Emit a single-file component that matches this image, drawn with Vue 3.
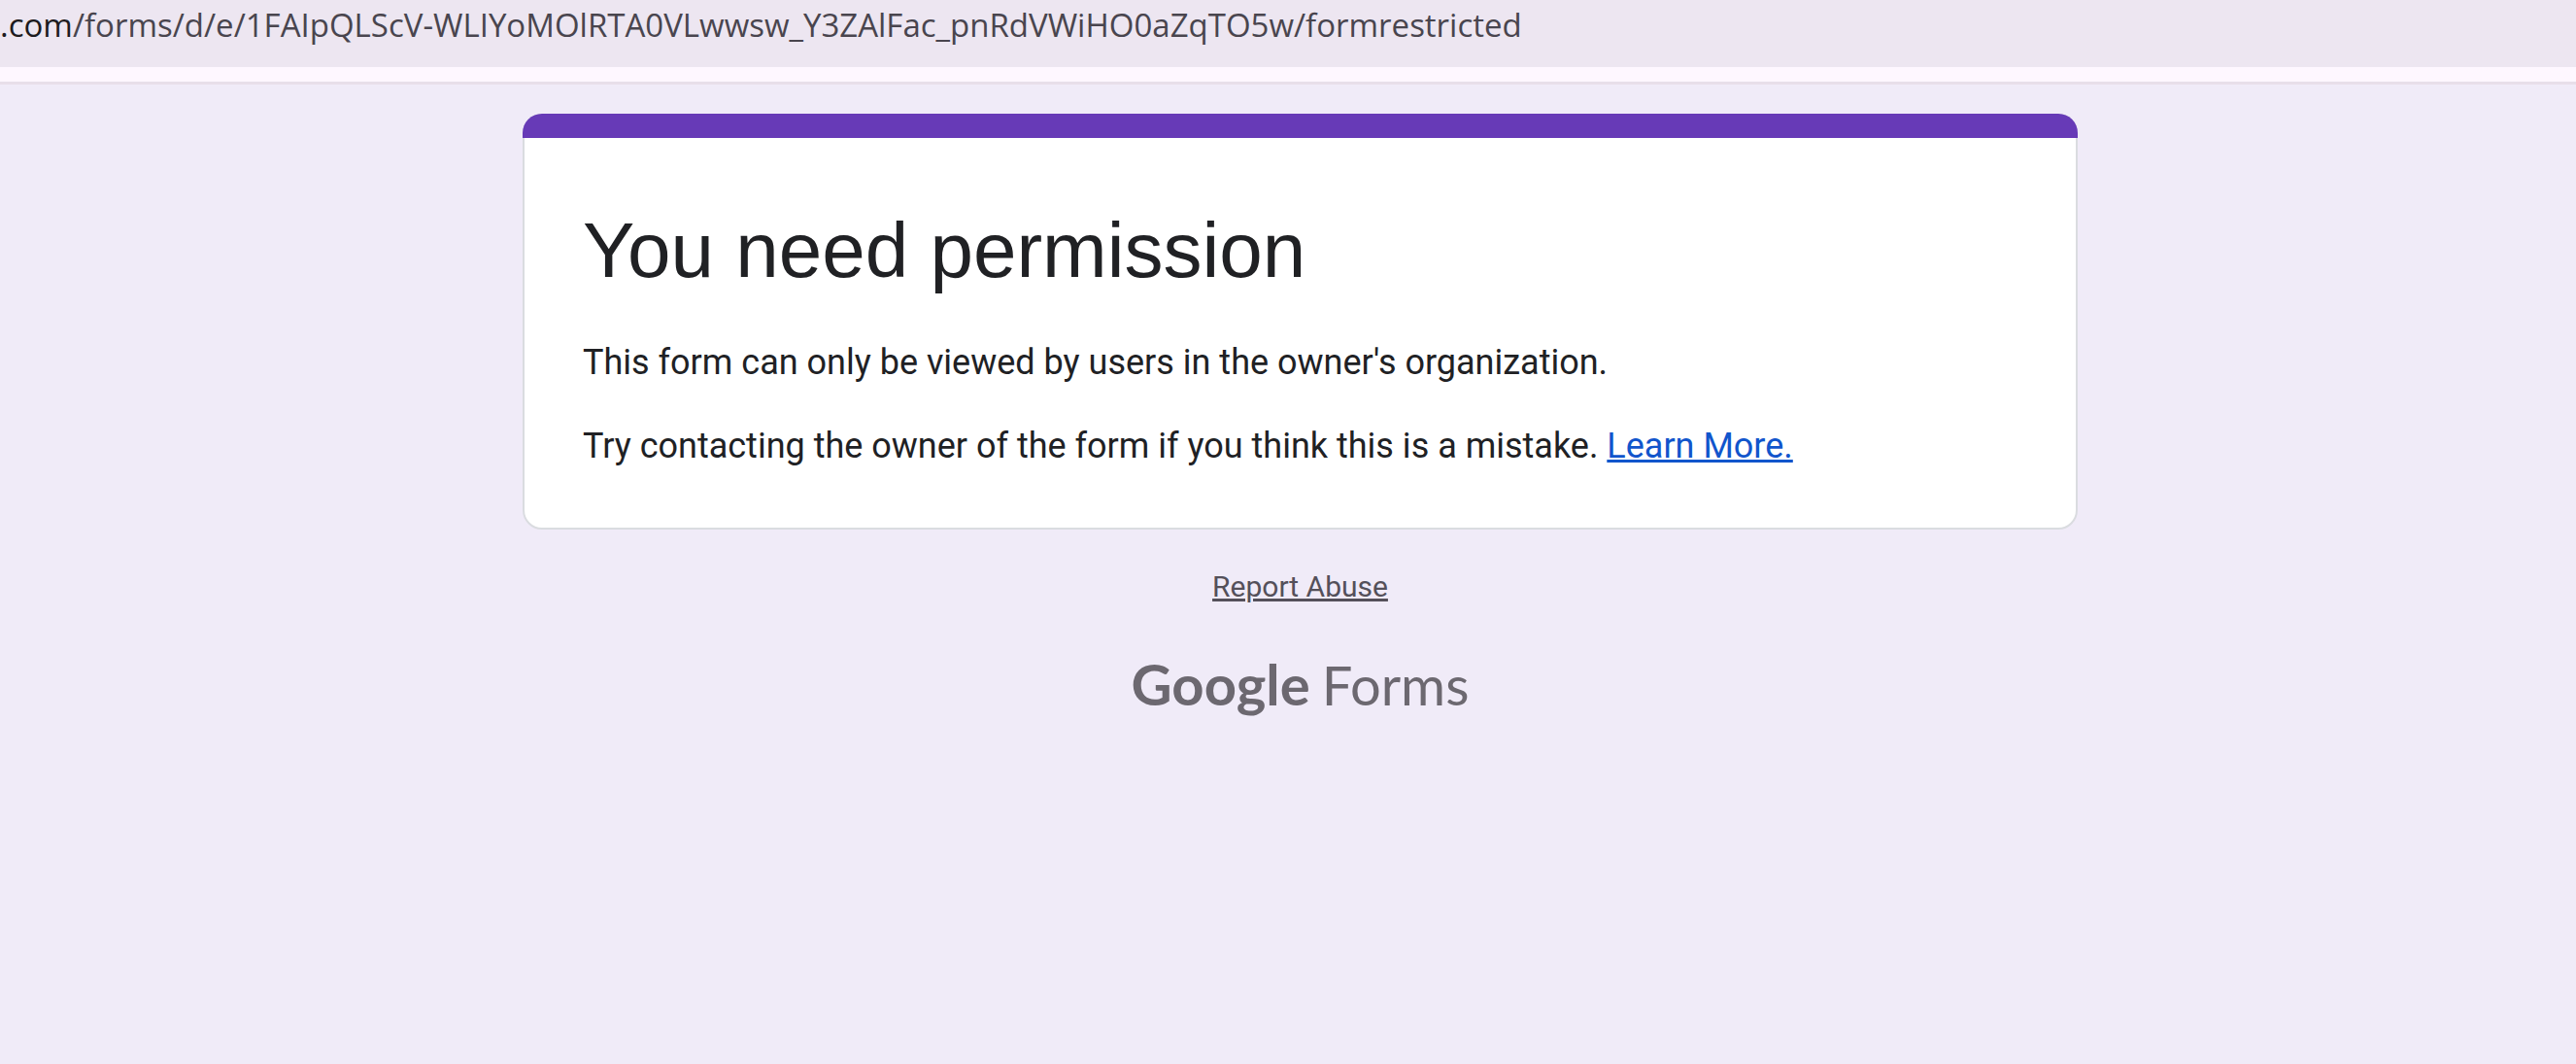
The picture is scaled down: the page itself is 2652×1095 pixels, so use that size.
<script setup>
const domain = '.com'
const path = '/forms/d/e/1FAIpQLScV-WLIYoMOlRTA0VLwwsw_Y3ZAlFac_pnRdVWiHO0aZqTO5w/formrestricted'
</script>

<template>
  <div class="page">
    <header class="toolbar">
      <div class="address"><span class="domain">{{ domain }}</span>{{ path }}</div>
    </header>
    <main class="content">
      <section class="card">
        <h1>You need permission</h1>
        <p>This form can only be viewed by users in the owner's organization.</p>
        <p>
          Try contacting the owner of the form if you think this is a mistake.
          <a href="#learn-more">Learn More.</a>
        </p>
      </section>
      <a class="report" href="#report">Report Abuse</a>
      <a class="logo" href="#forms"><span class="brand">Google</span><span class="product">Forms</span></a>
    </main>
  </div>
</template>

<style>
body {
  margin: 0;
  background: #f0ebf8;
}
</style>

<style scoped>
.page {
  font-family: Roboto, "Liberation Sans", sans-serif;
  color: #202124;
}

.toolbar {
  background: #ede6f1;
  border-bottom: 3px solid #e8dfea;
}

.toolbar::after {
  content: "";
  display: block;
  height: 15px;
  background: #fef7ff;
}

.address {
  padding: 2px 0 19px;
  font-family: "Open Sans", "Noto Sans", sans-serif;
  font-size: 33px;
  line-height: 48px;
  white-space: nowrap;
  color: #49454e;
}

.domain {
  color: #1d1b20;
}

.content {
  display: flex;
  flex-direction: column;
  align-items: center;
  padding: 30px 0 60px 25px;
}

.card {
  position: relative;
  box-sizing: border-box;
  width: 1601px;
  max-width: 100%;
  padding: 79px 60px 59px;
  background: #fff;
  border: 2px solid #dadce0;
  border-radius: 20px;
}

.card::before {
  content: "";
  position: absolute;
  top: -2px;
  left: -2px;
  right: -2px;
  height: 25px;
  background: #673ab7;
  border-radius: 20px 20px 0 0;
}

h1 {
  margin: 0 0 30px;
  font-family: "Liberation Sans", Arial, sans-serif;
  font-size: 80px;
  font-weight: 400;
  line-height: 120px;
}

p {
  margin: 0;
  font-size: 36px;
  line-height: 50px;
}

p + p {
  margin-top: 36px;
}

p a {
  color: #1155cc;
}

.report {
  margin-top: 39px;
  font-size: 30px;
  line-height: 40px;
  color: #54505a;
}

.logo {
  display: flex;
  align-items: baseline;
  gap: 12px;
  margin-top: 40px;
  font-family: Lato, sans-serif;
  font-size: 56px;
  line-height: 80px;
  color: #6c6870;
  text-decoration: none;
}

.brand {
  font-size: 58px;
  font-weight: 700;
}
</style>
